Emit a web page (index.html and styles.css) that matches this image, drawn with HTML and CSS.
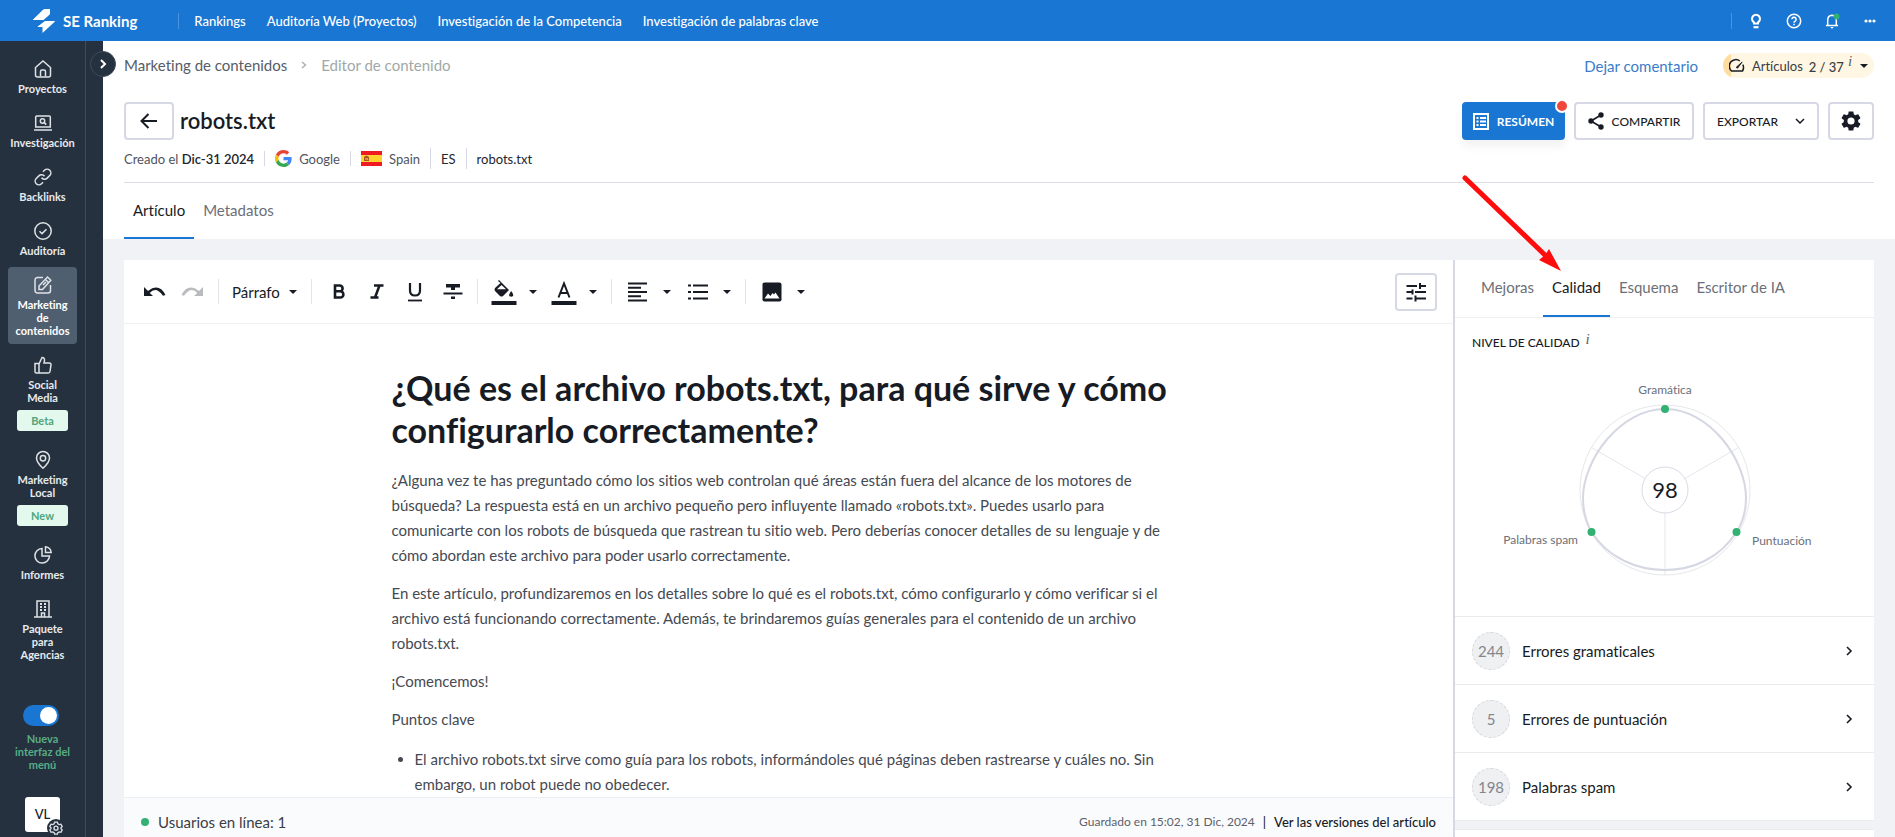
FILE: index.html
```html
<!DOCTYPE html>
<html lang="es">
<head>
<meta charset="utf-8">
<title>SE Ranking - Editor de contenido</title>
<link rel="stylesheet" href="styles.css">
</head>
<body>
<header class="topbar">
  <a class="brand" href="#">
    <svg width="22" height="24" viewBox="0 0 22 24" fill="#fff"><path d="M10 .8Q11 0 12 0h5v4.500q0 .8-.8 1.500L10.500 11H.3q-.6-.2 0-.8z"/><path d="M12 12h9.500q.8.200.2.800L9.500 24v-6H5q-.6-.2 0-.8z"/></svg>
    <span>SE Ranking</span>
  </a>
  <nav class="topnav">
    <a href="#">Rankings</a><a href="#">Auditoría Web (Proyectos)</a><a href="#">Investigación de la Competencia</a><a href="#">Investigación de palabras clave</a>
  </nav>
  <div class="toptools">
    <button aria-label="Consejos"><svg width="16" height="16" viewBox="0 0 16 16" fill="none" stroke="#fff" stroke-width="2"><path d="M6 10.500V9.300a4 4 0 1 1 4 0v1.200z"/><path d="M5.500 14.200h5" stroke-width="2.200"/></svg></button>
    <button aria-label="Ayuda"><svg width="16" height="16" viewBox="0 0 16 16" fill="none" stroke="#fff" stroke-width="1.500"><circle cx="8" cy="8" r="6.700"/><path d="M5.900 6.300a2.100 2.100 0 1 1 3.200 1.800Q8 8.700 8 9.700M8 10.700v1.500"/></svg></button>
    <button aria-label="Notificaciones"><svg width="16" height="16" viewBox="0 0 16 16"><path d="M2 12.500h12M3.700 12V7q0-4.500 4.300-4.800 4.300.3 4.300 4.800v5" fill="none" stroke="#fff" stroke-width="1.500"/><path d="M6.500 14h3q-.3 1.500-1.500 1.500T6.500 14z" fill="#fff"/><circle cx="12.500" cy="3.500" r="3" fill="#33b173"/></svg></button>
    <button aria-label="Más"><svg width="16" height="16" viewBox="0 0 16 16" fill="#fff"><circle cx="4" cy="8" r="1.600"/><circle cx="8" cy="8" r="1.600"/><circle cx="12" cy="8" r="1.600"/></svg></button>
  </div>
</header>
<div class="shell">
  <aside class="sidebar">
    <nav class="side-nav">
      <a href="#"><svg viewBox="0 0 18 18"><path d="M1.500 7.500 9 1l7.500 6.500v7.500a2 2 0 0 1-2 2h-11a2 2 0 0 1-2-2z"/><path d="M6.500 16.500v-5a1.500 1.500 0 0 1 1.500-1.500h2a1.500 1.500 0 0 1 1.500 1.500v5"/></svg>Proyectos</a>
      <a href="#"><svg viewBox="0 0 18 18"><path d="M1.700 13V3q0-1 1-1h12.600q1 0 1 1v10zM0 16h18"/><circle cx="8.500" cy="7" r="2.200"/><path d="m10.200 8.600 2 2"/></svg>Investigación</a>
      <a href="#"><svg viewBox="0 0 24 24" class="link-icon"><path d="M10 13a5 5 0 0 0 7.540.540l3.500-3.500a5 5 0 0 0-7.070-7.070l-2 2M14 11a5 5 0 0 0-7.540-.540l-3.500 3.500a5 5 0 0 0 7.070 7.070l2-2"/></svg>Backlinks</a>
      <a href="#"><svg viewBox="0 0 18 18"><circle cx="9" cy="9" r="8.200"/><path d="m5.500 9.300 2.500 2.300 4.500-4.400"/></svg>Auditoría</a>
      <a href="#" class="active"><svg viewBox="0 0 18 18"><path d="M9 1.500H3.500a2.500 2.500 0 0 0-2.500 2.500v10.500a2.500 2.500 0 0 0 2.500 2.500H14a2.500 2.500 0 0 0 2.500-2.500V9"/><path d="M5 13.500v-3.500L13.500 1l3.300 3.300L8.500 13.500zM11.500 3.500l3 3M9 9l3-3"/></svg>Marketing de contenidos</a>
      <a href="#"><svg viewBox="0 0 18 18"><path d="M1 7.500h4v9.500H2.500A1.500 1.500 0 0 1 1 15.500zM5 8l3-6.500q2.800.2 2.500 3L10 7h5.500a1.500 1.500 0 0 1 1.500 1.700l-1 6.800a1.700 1.700 0 0 1-1.700 1.500H5"/></svg>Social Media<span class="badge">Beta</span></a>
      <a href="#"><svg viewBox="0 0 18 18"><path d="M9 17.200Q2.500 11.500 2.500 7a6.500 6.500 0 0 1 13 0q0 4.500-6.500 10.200z"/><circle cx="9" cy="7.300" r="2.700"/></svg>Marketing Local<span class="badge">New</span></a>
      <a href="#"><svg viewBox="0 0 18 18"><path d="M8 2.500A7.300 7.300 0 1 0 15.500 10H8z"/><path d="M11.500.8Q16.500 1.500 17.200 6.500h-5.700z"/></svg>Informes</a>
      <a href="#"><svg viewBox="0 0 18 18"><path d="M3 17V1h12v16M0 17h18M7.500 17v-4h3v4"/><path d="M6 4h2M10 4h2M6 7h2M10 7h2M6 10h2M10 10h2" stroke-width="2"/></svg>Paquete para Agencias</a>
    </nav>
    <div class="side-foot">
      <label class="new-menu"><input type="checkbox" class="switch" checked>Nueva interfaz del menú</label>
      <button class="avatar">VL<svg width="18" height="18" viewBox="0 0 18 18"><circle cx="9" cy="9" r="9" fill="#25313e"/><path d="m7.600 3.200h2.800l.5 1.700 1.300.7 1.700-.4 1.300 2.300-1.200 1.300v.9l1.200 1.300-1.300 2.300-1.700-.4-1.300.7-.5 1.600H7.600l-.5-1.600-1.300-.7-1.700.4-1.300-2.300L4 9.600v-.9L2.800 7.500l1.300-2.300 1.700.4 1.300-.7z" fill="none" stroke="#dfe3ea" stroke-width="1.300"/><circle cx="9" cy="9.200" r="2" fill="none" stroke="#dfe3ea" stroke-width="1.300"/></svg></button>
    </div>
  </aside>
  <button class="expander" aria-label="Expandir menú"><svg width="10" height="10" viewBox="0 0 10 10" fill="none" stroke="#fff" stroke-width="2"><path d="m3 1 4 4-4 4"/></svg></button>
  <main class="main">
    <section class="pagehead">
      <div class="row crumbs-row">
        <nav class="crumbs"><a href="#">Marketing de contenidos</a><svg width="6" height="8" viewBox="0 0 6 8" fill="none" stroke="#a5b0ac" stroke-width="1.400"><path d="m1 1 3.500 3L1 7"/></svg><span>Editor de contenido</span></nav>
        <div class="crumb-tools">
          <a href="#">Dejar comentario</a>
          <button class="quota"><svg width="16" height="16" viewBox="0 0 16 16" fill="none" stroke="#171b24" stroke-width="1.500"><path d="M10.800 3A6.500 6.500 0 0 0 2.500 13h11a6.500 6.500 0 0 0 .3-6.300"/><path d="m7.200 9.300 6-5.300-4.700 6.300z" fill="#171b24" stroke-width=".8"/></svg><span>Artículos</span><span class="num">2 / 37<i class="info">i</i></span><svg class="caret" width="8" height="4" viewBox="0 0 8 4"><path d="M0 0h8L4 4z"/></svg></button>
        </div>
      </div>
      <div class="row title-row">
        <button class="btn back" aria-label="Volver"><svg width="18" height="16" viewBox="0 0 18 16" fill="none" stroke="#171b24" stroke-width="2"><path d="M17 8H2M8.500 1l-7 7 7 7"/></svg></button>
        <h1>robots.txt</h1>
        <div class="actions">
          <button class="btn primary"><svg width="16" height="17" viewBox="0 0 16 17"><path d="M1 1h14v15H1z" fill="none" stroke="#fff" stroke-width="2"/><path d="M3.500 5h2M3.500 8.500h2M3.500 12h2M7 5h6M7 8.500h6M7 12h6" stroke="#fff" stroke-width="1.800"/></svg>RESÚMEN<span class="dot"></span></button>
          <button class="btn share"><svg width="16" height="18" viewBox="0 0 16 18" fill="#171b24"><path d="M13 3 3 9l10 6" fill="none" stroke="#171b24" stroke-width="1.700"/><circle cx="13" cy="3" r="2.700"/><circle cx="3" cy="9" r="2.700"/><circle cx="13" cy="15" r="2.700"/></svg>COMPARTIR</button>
          <button class="btn export" aria-haspopup="true">EXPORTAR<svg width="10" height="6" viewBox="0 0 10 6" fill="none" stroke="#171b24" stroke-width="1.500"><path d="m1 1 4 4 4-4"/></svg></button>
          <button class="btn gear" aria-label="Ajustes"><svg width="20" height="20" viewBox="2 2 20 20" fill="#171b24"><path d="M19.140 12.940c.04-.3.06-.61.06-.94 0-.32-.02-.64-.07-.94l2.030-1.580a.49.490 0 0 0 .12-.61l-1.920-3.320a.488.488 0 0 0-.59-.22l-2.390.96c-.5-.38-1.030-.7-1.620-.94l-.36-2.540a.484.484 0 0 0-.48-.41h-3.840c-.24 0-.43.17-.47.41l-.36 2.540c-.59.24-1.130.57-1.620.94l-2.390-.96c-.22-.08-.47 0-.59.22L2.740 8.870c-.12.21-.08.47.12.61l2.030 1.580c-.05.3-.09.63-.09.94s.02.64.07.94l-2.030 1.580a.49.490 0 0 0-.12.61l1.920 3.320c.12.22.37.29.59.22l2.390-.96c.5.38 1.030.7 1.620.94l.36 2.540c.05.24.24.41.48.41h3.840c.24 0 .44-.17.47-.41l.36-2.540c.59-.24 1.130-.56 1.620-.94l2.390.96c.22.08.47 0 .59-.22l1.920-3.320c.12-.22.07-.47-.12-.61zM12 15.600A3.600 3.600 0 1 1 12 8.400a3.600 3.600 0 0 1 0 7.200z"/></svg></button>
        </div>
      </div>
      <div class="meta">
        <span>Creado el <b>Dic-31 2024</b></span>
        <span><svg width="17" height="17" viewBox="0 0 48 48"><path fill="#EA4335" d="M24 9.500c3.540 0 6.710 1.220 9.210 3.600l6.850-6.850C35.900 2.380 30.470 0 24 0 14.620 0 6.510 5.380 2.560 13.220l7.980 6.190C12.430 13.720 17.740 9.500 24 9.500z"/><path fill="#4285F4" d="M46.980 24.550c0-1.570-.15-3.090-.38-4.550H24v9.020h12.940c-.58 2.960-2.260 5.480-4.780 7.180l7.730 6c4.510-4.180 7.090-10.360 7.090-17.650z"/><path fill="#FBBC05" d="M10.530 28.590a14.500 14.500 0 0 1 0-9.180l-7.980-6.190a24 24 0 0 0 0 21.560z"/><path fill="#34A853" d="M24 48c6.480 0 11.930-2.130 15.890-5.810l-7.730-6c-2.150 1.450-4.920 2.300-8.160 2.300-6.260 0-11.570-4.220-13.470-9.910l-7.980 6.190C6.510 42.620 14.620 48 24 48z"/></svg>Google</span>
        <span><svg width="21" height="15" viewBox="0 0 21 15"><path fill="#f01b20" d="M0 0h21v15H0z"/><path fill="#ffd22e" d="M0 4h21v7H0z"/><path fill="#a9522a" d="M3 6l2.500-1.500L8 6v4H3z"/><path fill="#ffd22e" d="M4.500 7h1v2h-1zM6.300 7h.8v2h-.8z"/></svg>Spain</span>
        <span class="tall dark">ES</span>
        <span class="tall dark">robots.txt</span>
      </div>
      <nav class="tabs"><a href="#" class="on">Artículo</a><a href="#">Metadatos</a></nav>
    </section>
    <div class="workspace">
      <section class="editor">
        <div class="toolbar">
          <button aria-label="Deshacer"><svg width="22" height="10" viewBox="0 0 22 10"><path d="M0 0v9h9L5.700 6Q12-1 19 8.700L21.500 8Q15-4.500 4 4z" fill="#171b24"/></svg></button>
          <button aria-label="Rehacer"><svg width="22" height="10" viewBox="0 0 22 10"><path d="M22 0v9h-9l3.300-3Q10-1 3 8.700L.5 8Q7-4.500 18 4z" fill="#b9bbbf"/></svg></button>
          <i class="sep"></i>
          <label class="block-type"><select aria-label="Estilo de texto"><option>Párrafo</option></select><svg class="caret" width="8" height="4" viewBox="0 0 8 4"><path d="M0 0h8L4 4z"/></svg></label>
          <i class="sep"></i>
          <button class="fmt" aria-label="Negrita"><svg width="20" height="20" viewBox="0 0 20 20"><path d="M6 3.500h4.700a2.900 2.900 0 0 1 0 5.800H6zM6 9.300h5.300a3.100 3.100 0 0 1 0 6.200H6z" fill="none" stroke="#171b24" stroke-width="2.600"/></svg></button>
          <button class="fmt" aria-label="Cursiva"><svg width="20" height="20" viewBox="0 0 20 20"><path d="M7 3.500h9.500M3.500 15.500h8M12.500 3.500l-4.500 12" fill="none" stroke="#171b24" stroke-width="2.500"/></svg></button>
          <button class="fmt" aria-label="Subrayado"><svg width="20" height="20" viewBox="0 0 20 20"><path d="M5 1v7.500q0 5 5 5t5-5V1" fill="none" stroke="#171b24" stroke-width="2.200"/><path d="M3 18.500h14" stroke="#171b24" stroke-width="1.800"/></svg></button>
          <button class="fmt" aria-label="Tachado"><svg width="20" height="20" viewBox="0 0 20 20" fill="#171b24"><path d="M3 2h14v3.500h-5V8H8V5.500H3zM.5 10.500h19v2H.5zM8 14.500h4V17H8z"/></svg></button>
          <i class="sep"></i>
          <button class="split" aria-label="Color de fondo"><svg width="26" height="26" viewBox="0 0 26 26" fill="#171b24"><path d="M.5 22h25v4H.5z"/><path d="M8 1l10 10-6 6q-1.500 1-3 0l-5-5q-1-1.500 0-3L9.500 4 7 2z"/><path d="M10.500 6 6 10.300h9z" fill="#fff"/><path d="M20.200 12q4.300 5.500 0 5.700-4.300-.2 0-5.700z"/></svg></button><svg class="caret" width="8" height="4" viewBox="0 0 8 4"><path d="M0 0h8L4 4z"/></svg>
          <button class="split" aria-label="Color de texto"><svg width="26" height="26" viewBox="0 0 26 26"><path d="M.5 22h25v4H.5z" fill="#171b24"/><path d="M7.500 18.500 13 4.500l5.500 14M9.200 14h7.600" fill="none" stroke="#171b24" stroke-width="2"/></svg></button><svg class="caret" width="8" height="4" viewBox="0 0 8 4"><path d="M0 0h8L4 4z"/></svg>
          <i class="sep"></i>
          <button class="split" aria-label="Alineación"><svg width="26" height="20" viewBox="0 0 26 20"><path d="M3 1.500h19M3 5.800h13M3 10h19M3 14.300h13M3 18.500h19" stroke="#171b24" stroke-width="2"/></svg></button><svg class="caret" width="8" height="4" viewBox="0 0 8 4"><path d="M0 0h8L4 4z"/></svg>
          <button class="split" aria-label="Lista"><svg width="26" height="20" viewBox="0 0 26 20"><path d="M8 3.500h15M8 10h15M8 16.500h15M3 3.500h3M3 10h3M3 16.500h3" stroke="#171b24" stroke-width="2"/></svg></button><svg class="caret" width="8" height="4" viewBox="0 0 8 4"><path d="M0 0h8L4 4z"/></svg>
          <i class="sep"></i>
          <button class="split" aria-label="Imagen"><svg width="26" height="20" viewBox="0 0 26 20"><rect x="3.500" y=".5" width="19" height="19" rx="2" fill="#171b24"/><path d="M5.500 16.500 9 11.500l2.500 2.500 2-3 1.500 1.500 1.500-2 4 6z" fill="#fff"/></svg></button><svg class="caret" width="8" height="4" viewBox="0 0 8 4"><path d="M0 0h8L4 4z"/></svg>
          <button class="btn tune" aria-label="Opciones"><svg width="20" height="20" viewBox="0 0 20 20" fill="none" stroke="#171b24" stroke-width="2"><path d="M.5 4H11M14 4h6M14 1v6M.5 10h6M6.500 7.500v5M9 10h11M.5 16.500h6M9.500 13.500v6M9.500 16.500H20"/></svg></button>
        </div>
        <article class="doc">
          <h2>¿Qué es el archivo robots.txt, para qué sirve y cómo configurarlo correctamente?</h2>
          <p>¿Alguna vez te has preguntado cómo los sitios web controlan qué áreas están fuera del alcance de los motores de búsqueda? La respuesta está en un archivo pequeño pero influyente llamado «robots.txt». Puedes usarlo para comunicarte con los robots de búsqueda que rastrean tu sitio web. Pero deberías conocer detalles de su lenguaje y de cómo abordan este archivo para poder usarlo correctamente.</p>
          <p>En este artículo, profundizaremos en los detalles sobre lo qué es el robots.txt, cómo configurarlo y cómo verificar si el archivo está funcionando correctamente. Además, te brindaremos guías generales para el contenido de un archivo robots.txt.</p>
          <p>¡Comencemos!</p>
          <p>Puntos clave</p>
          <ul><li>El archivo robots.txt sirve como guía para los robots, informándoles qué páginas deben rastrearse y cuáles no. Sin embargo, un robot puede no obedecer.</li></ul>
        </article>
        <footer class="status"><span class="online">Usuarios en línea: 1</span><span class="saved">Guardado en 15:02, 31 Dic, 2024</span><span class="bar">|</span><a href="#">Ver las versiones del artículo</a></footer>
      </section>
      <aside class="panel">
        <nav class="ptabs"><a href="#">Mejoras</a><a href="#" class="on">Calidad</a><a href="#">Esquema</a><a href="#">Escritor de IA</a></nav>
        <section class="quality">
          <h3>NIVEL DE CALIDAD<i class="info">i</i></h3>
          <svg class="chart" width="340" height="230" viewBox="-170 -120 340 230">
            <g fill="none" stroke="#e6e7ea"><circle r="85"/><path d="M0 0v85M0 0-73.500-42.500M0 0 73.500-42.500"/></g>
            <path d="M0-81C45-81 81-30 81 8 81 21 78 32 71.500 42 55 68 28 80 0 80S-57 68-73.500 42C-79 32-82 21-82 8-82-30-45-81 0-81z" fill="none" stroke="#d5d7e3" stroke-width="2"/>
            <circle r="23" fill="#fff" fill-opacity=".8" stroke="#d9dae6"/>
            <g fill="#33b173"><circle cy="-81" r="4"/><circle cx="-73.500" cy="42" r="4"/><circle cx="71.500" cy="42" r="4"/></g>
            <text class="score" y="8" text-anchor="middle">98</text>
            <g class="lbl"><text y="-96" text-anchor="middle">Gramática</text><text x="-87" y="54" text-anchor="end">Palabras spam</text><text x="87" y="55">Puntuación</text></g>
          </svg>
        </section>
        <ul class="issues">
          <li><a href="#"><span class="count">244</span>Errores gramaticales<svg width="8" height="10" viewBox="0 0 8 10" fill="none" stroke="#171b24" stroke-width="1.600"><path d="m2 1 4 4-4 4"/></svg></a></li>
          <li><a href="#"><span class="count">5</span>Errores de puntuación<svg width="8" height="10" viewBox="0 0 8 10" fill="none" stroke="#171b24" stroke-width="1.600"><path d="m2 1 4 4-4 4"/></svg></a></li>
          <li><a href="#"><span class="count">198</span>Palabras spam<svg width="8" height="10" viewBox="0 0 8 10" fill="none" stroke="#171b24" stroke-width="1.600"><path d="m2 1 4 4-4 4"/></svg></a></li>
        </ul>
        <div class="band"></div>
        <svg class="arrow" width="100" height="98" viewBox="0 0 100 98"><path d="M3 4 84 82" stroke="#ff0d0d" stroke-width="5" stroke-linecap="round"/><path d="M99 97 77 86l6-5 4-6z" fill="#ff0d0d"/></svg>
      </aside>
    </div>
  </main>
</div>
</body>
</html>
```
FILE: styles.css
```css
* { box-sizing: border-box; }
body { margin: 0; height: 100vh; display: flex; flex-direction: column; overflow: hidden; font-family: Lato, "Open Sans", sans-serif; font-size: 15px; font-variant-ligatures: none; color: #171b24; background: #f1f2f6; }
a { color: inherit; text-decoration: none; }
button, select, input { font: inherit; color: inherit; margin: 0; }
button { border: 0; padding: 0; background: none; display: flex; align-items: center; justify-content: center; }
svg { display: block; flex: none; }
h1, h2, h3, p, ul { margin: 0; padding: 0; }
.caret { fill: #171b24; }
.info { font-family: "Liberation Serif", serif; font-size: 15px; line-height: 10px; color: #5a5f6b; }

.topbar { flex: none; height: 41px; background: #1976d2; color: #fff; display: flex; align-items: center; padding: 0 17px 0 33px; }
.brand { display: flex; align-items: center; gap: 8px; font-size: 15px; font-weight: 700; }
.topnav { display: flex; gap: 21px; margin-left: 41px; padding-left: 15px; border-left: 1px solid #4a94de; font-size: 13px; font-weight: 500; line-height: 16px; }
.toptools { margin-left: auto; display: flex; gap: 22px; padding-left: 16px; border-left: 1px solid #4a94de; }

.shell { flex: 1; min-height: 0; display: flex; position: relative; }
.sidebar { width: 103px; flex: none; background: #25313e; color: #e8eaed; display: flex; flex-direction: column; font-size: 11px; line-height: 13px; font-weight: 700; text-align: center; padding: 10px 26px 5px 8px; background-image: linear-gradient(#414c58, #414c58); background-size: 1px 100%; background-position: 85px 0; background-repeat: no-repeat; }
.side-nav { display: flex; flex-direction: column; gap: 3px; }
.side-nav a { display: flex; flex-direction: column; align-items: center; padding: 9px 7px 7px; border-radius: 4px; }
.side-nav svg { width: 18px; height: 18px; margin-bottom: 4px; fill: none; stroke: #dfe2e6; stroke-width: 1.5; overflow: visible; }
.side-nav .link-icon { stroke-width: 2; }
.side-nav .active { background: #505f70; color: #fff; }
.badge { width: 51px; height: 21px; line-height: 22px; margin: 6px 0 1px; border-radius: 3px; background: #e4f9ed; color: #4da67c; }
.side-foot { margin-top: auto; display: flex; flex-direction: column; align-items: center; gap: 26px; }
.new-menu { display: flex; flex-direction: column; gap: 6px; align-items: center; color: #57ad85; width: 58px; }
.switch { appearance: none; width: 36px; height: 21px; margin-right: 4px; border-radius: 11px; background: #1976d2; padding: 2px; display: flex; justify-content: flex-end; }
.switch::before { content: ""; width: 17px; height: 17px; border-radius: 50%; background: #fff; }
.avatar { position: relative; width: 35px; height: 35px; background: #fff; border-radius: 3px; color: #171b24; font-size: 13px; font-weight: 500; }
.avatar svg { position: absolute; right: -5px; bottom: -5px; }
.expander { position: absolute; left: 90px; top: 10px; width: 26px; height: 26px; border-radius: 50%; background: #25313e; border: 1px solid #414c58; z-index: 1; }

.main { flex: 1; min-width: 0; display: flex; flex-direction: column; }
.pagehead { flex: none; background: #fff; padding: 12px 21px 0; }
.row { display: flex; align-items: center; }
.crumbs-row { justify-content: space-between; height: 25px; margin-bottom: 24px; }
.crumbs, .crumb-tools { display: flex; align-items: center; gap: 14px; line-height: 18px; color: #575c66; }
.crumbs { padding-bottom: 2px; }
.crumbs span { color: #a0a9a7; }
.crumb-tools { gap: 25px; color: #3a7cc9; }
.quota { width: 151px; height: 25px; border-radius: 13px; font-size: 13px; color: #3a3d44; background: linear-gradient(90deg, #ffdca0 8px, #fff7e3 8px); }
.quota span { margin-left: 7px; }
.quota .num { margin: 0 8px 0 6px; font-weight: 500; }
.quota .info { vertical-align: 6px; margin-left: 4px; }
.btn { height: 38px; border: 2px solid #d6d8e5; border-radius: 4px; background: #fff; font-size: 12px; font-weight: 500; white-space: nowrap; }
.back { width: 50px; }
h1 { font-size: 22px; line-height: 28px; font-weight: 600; margin-left: 6px; }
.actions { margin-left: auto; display: flex; gap: 9px; }
.primary { position: relative; width: 103px; gap: 8px; background: #1976d2; border-color: #1976d2; color: #fff; font-weight: 700; box-shadow: 0 7px 10px rgba(0,0,0,.05); }
.dot { position: absolute; right: -6px; top: -5px; width: 14px; height: 14px; border-radius: 50%; background: #f0463c; border: 2px solid #fff; }
.share { width: 120px; gap: 8px; }
.export { width: 116px; gap: 17px; }
.gear { width: 46px; }
.meta { display: flex; align-items: center; height: 21px; margin-top: 8px; font-size: 13px; color: #50545e; }
.meta span { display: flex; align-items: center; height: 15px; gap: 7px; white-space: pre; }
.meta span + span { margin-left: 10px; padding-left: 10px; border-left: 1px solid #d6d8e5; }
.meta span:first-child { gap: 0; }
.meta .tall { height: 21px; }
.meta b { font-weight: 600; }
.meta b, .meta .dark { color: #23262f; }
.tabs { display: flex; margin-top: 13px; border-top: 1px solid #dcdde6; height: 57px; }
.tabs a { padding: 0 9px; line-height: 54px; color: #6b6f78; border-bottom: 2px solid transparent; }
.tabs .on, .ptabs .on { color: #171b24; border-color: #1976d2; }

.workspace { flex: 1; min-height: 0; display: flex; padding: 21px 21px 0; }
.editor { flex: 1; min-width: 0; background: #fff; display: flex; flex-direction: column; }
.toolbar { flex: none; height: 64px; padding: 0 16px 0 20px; display: flex; align-items: center; border-bottom: 1px solid #f0f0f3; }
.toolbar > button { margin-right: 15px; }
.sep { width: 1px; height: 25px; background: #e3e4e8; margin-right: 13px; }
.block-type { display: flex; align-items: center; gap: 7px; margin-right: 14px; }
.block-type .caret { pointer-events: none; }
.block-type select { appearance: none; border: 0; background: none; padding: 0; width: 50px; }
.toolbar > .fmt { margin: 0 14px 0 4px; }
.toolbar > .split { margin: 0 12px 0 0; }
.toolbar > .caret { margin-right: 14px; }
.toolbar > .tune { margin: 0 0 0 auto; width: 42px; }
.doc { flex: 1; min-height: 0; overflow: hidden; width: 794px; max-width: 100%; margin: 0 auto; padding-top: 43px; line-height: 25px; color: #454952; }
.doc h2 { font-size: 34px; line-height: 42px; font-weight: 700; color: #171b24; margin-bottom: 17px; }
.doc p { margin-bottom: 13px; }
.doc ul { padding: 2px 0 0 23px; }
.status { flex: none; height: 40px; border-top: 1px solid #eceef2; background: #fafbfd; display: flex; align-items: center; padding: 8px 17px 0; font-size: 12px; color: #5d616b; }
.online { display: flex; align-items: center; gap: 9px; margin-right: auto; font-size: 15px; color: #3a3d45; }
.online::before { content: ""; width: 8px; height: 8px; border-radius: 50%; background: #33b173; }
.status .bar { margin: 0 8px; }
.status a, .status .bar { color: #171b24; font-size: 13px; font-weight: 500; }

.panel { position: relative; flex: none; width: 421px; border-left: 2px solid #d6d8e5; background: #fff; display: flex; flex-direction: column; }
.ptabs { display: flex; height: 58px; border-bottom: 1px solid #f0f0f3; padding-left: 17px; }
.ptabs a { padding: 0 9px; line-height: 55px; border-bottom: 2px solid transparent; color: #6b6f78; }
.quality { height: 299px; padding: 16px 17px; border-bottom: 1px solid #ebebed; }
.quality h3 { font-size: 12px; line-height: 18px; font-weight: 500; display: flex; gap: 6px; }
.chart { margin: 18px auto 0; overflow: visible; }
.score { font-size: 22px; fill: #171b24; }
.lbl { font-size: 12px; fill: #6b6f78; }
.issues { list-style: none; font-size: 15px; }
.issues li + li { border-top: 1px solid #ebebed; }
.issues a { display: flex; align-items: center; gap: 12px; height: 67px; padding: 0 21px 0 17px; }
.issues svg { margin-left: auto; }
.count { width: 38px; height: 38px; border-radius: 50%; border: 1px dashed #d4d6dc; background: #eff0f2; color: #83868d; display: flex; align-items: center; justify-content: center; }
.band { height: 10px; background: #f1f2f6; border: solid #ebebed; border-width: 1px 0; }
.arrow { position: absolute; left: 7px; top: -86px; }
```
